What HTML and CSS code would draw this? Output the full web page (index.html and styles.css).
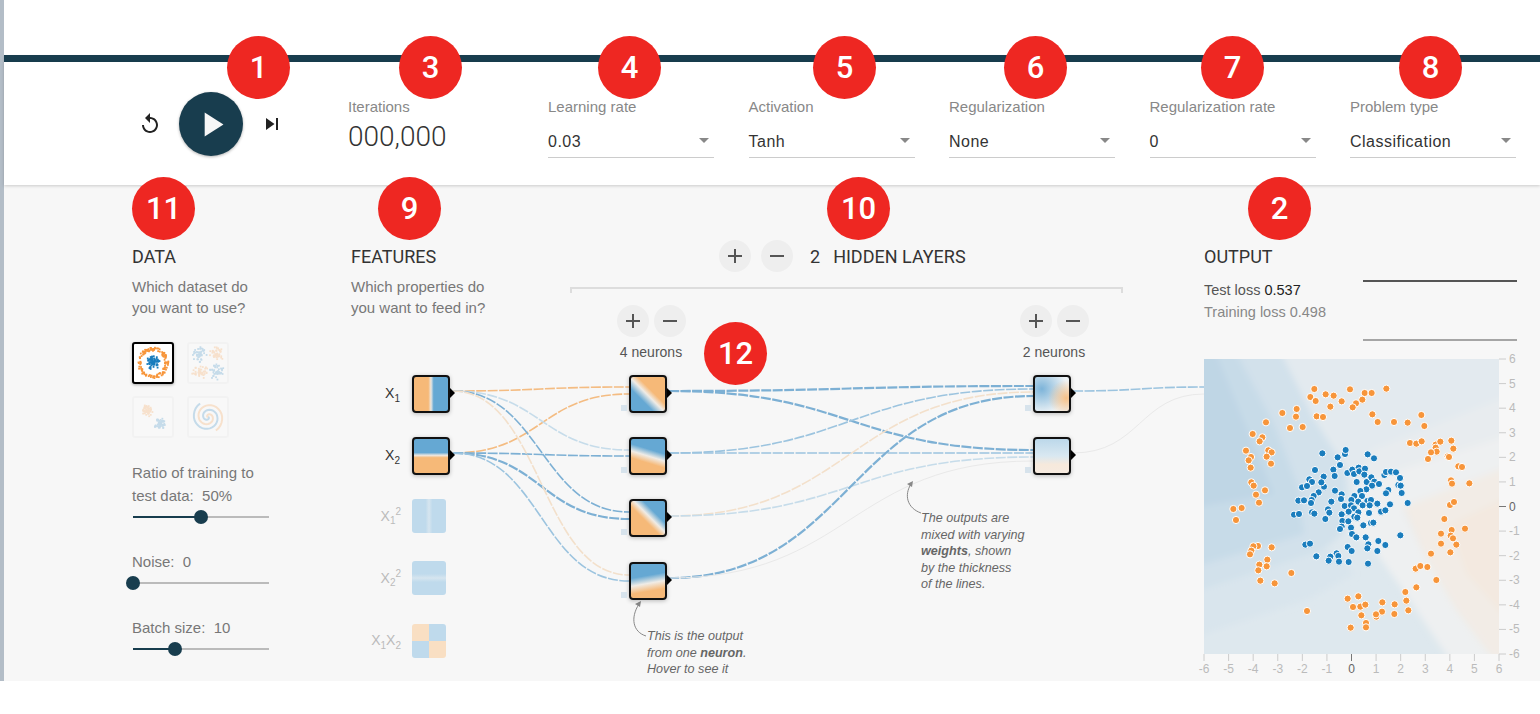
FILE: index.html
```html
<!DOCTYPE html>
<html>

<head>
	<meta charset="UTF-8">
	<title>Tensorflow Playground</title>
	<link rel="stylesheet" href="styles.css">
</head>

<body>
	<svg class="defs" width="0" height="0">
		<symbol id="icon-add" viewBox="0 0 24 24"><path d="M19 13h-6v6h-2v-6H5v-2h6V5h2v6h6v2z" /></symbol>
		<symbol id="icon-remove" viewBox="0 0 24 24"><path d="M19 13H5v-2h14v2z" /></symbol>
	</svg>

	<div class="page">
		<div class="topbar"></div>

		<header class="header">
			<div class="player">
				<svg class="icon-small" viewBox="0 0 24 24"><path d="M12 5V1L7 6l5 5V7c3.31 0 6 2.69 6 6s-2.69 6-6 6-6-2.69-6-6H4c0 4.42 3.58 8 8 8s8-3.58 8-8-3.58-8-8-8z" /></svg>
				<div class="play-btn">
					<svg class="icon-play" viewBox="0 0 24 24"><path d="M8 5v14l11-7z" /></svg>
				</div>
				<svg class="icon-small" viewBox="0 0 24 24"><path d="M6 18l8.5-6L6 6v12zM16 6v12h2V6h-2z" /></svg>
			</div>
			<div class="control">
				<div class="control-label">Iterations</div>
				<div class="iterations">000,000</div>
			</div>
			<div class="control">
				<div class="control-label">Learning rate</div>
				<div class="select">0.03</div>
			</div>
			<div class="control">
				<div class="control-label">Activation</div>
				<div class="select">Tanh</div>
			</div>
			<div class="control">
				<div class="control-label">Regularization</div>
				<div class="select">None</div>
			</div>
			<div class="control">
				<div class="control-label">Regularization rate</div>
				<div class="select">0</div>
			</div>
			<div class="control">
				<div class="control-label">Problem type</div>
				<div class="select">Classification</div>
			</div>
		</header>

		<main class="main">
			<section class="data-col">
				<h4 class="heading">DATA</h4>
				<p class="hint">Which dataset do<br>you want to use?</p>
				<div class="datasets">
					<svg class="dataset selected" id="dsCircle" viewBox="0 0 38 38"></svg>
					<svg class="dataset" id="dsXor" viewBox="0 0 38 38"></svg>
					<svg class="dataset" id="dsGauss" viewBox="0 0 38 38"></svg>
					<svg class="dataset" id="dsSpiral" viewBox="0 0 38 38"></svg>
				</div>
				<div class="slider-label slider-ratio">Ratio of training to<br>test data:&nbsp; 50%</div>
				<div class="slider"><div class="slider-fill" style="width: 50%"></div><div class="slider-thumb" style="left: 50%"></div></div>
				<div class="slider-label">Noise:&nbsp; 0</div>
				<div class="slider"><div class="slider-fill" style="width: 0%"></div><div class="slider-thumb" style="left: 0%"></div></div>
				<div class="slider-label">Batch size:&nbsp; 10</div>
				<div class="slider"><div class="slider-fill" style="width: 31%"></div><div class="slider-thumb" style="left: 31%"></div></div>
			</section>

			<section class="network">
				<div class="features-head">
					<h4 class="heading">FEATURES</h4>
					<p class="hint">Which properties do<br>you want to feed in?</p>
				</div>
				<div class="layers-head">
					<div class="layers-title">
						<div class="round-btn"><svg><use href="#icon-add" /></svg></div>
						<div class="round-btn"><svg><use href="#icon-remove" /></svg></div>
						<span class="layers-count">2</span>
						<span class="layers-text">HIDDEN LAYERS</span>
					</div>
					<div class="bracket"></div>
					<div class="layer-controls">
						<div class="layer-control">
							<div class="round-pair">
								<div class="round-btn"><svg><use href="#icon-add" /></svg></div>
								<div class="round-btn"><svg><use href="#icon-remove" /></svg></div>
							</div>
							<div class="neuron-count">4 neurons</div>
						</div>
						<div class="layer-control">
							<div class="round-pair">
								<div class="round-btn"><svg><use href="#icon-add" /></svg></div>
								<div class="round-btn"><svg><use href="#icon-remove" /></svg></div>
							</div>
							<div class="neuron-count">2 neurons</div>
						</div>
					</div>
				</div>

				<div class="diagram">
					<svg class="links" viewBox="351 185 853 496">
						<path class="link orange" d="M453 391C541 391 541 387 629 387" />
						<path class="link orange" d="M453 453C541 453 541 394 629 394" />
						<path class="link blue pale" d="M453 391C541 391 541 450 629 450" />
						<path class="link blue" d="M453 453C541 453 541 456 629 456" />
						<path class="link blue" d="M453 391C541 391 541 512 629 512" />
						<path class="link blue thick" d="M453 453C541 453 541 519 629 519" />
						<path class="link orange faint" d="M453 391C541 391 541 575 629 575" />
						<path class="link blue mid" d="M453 453C541 453 541 581 629 581" />

						<path class="link blue thick" d="M669 391C850 391 850 386 1033 386" />
						<path class="link blue thick" d="M669 391C850 391 850 450 1033 450" />
						<path class="link blue mid" d="M669 453C850 453 850 389 1033 389" />
						<path class="link blue mid" d="M669 453C850 453 850 453 1033 453" />
						<path class="link orange faint" d="M669 516C850 516 850 392 1033 392" />
						<path class="link blue pale" d="M669 516C850 516 850 457 1033 457" />
						<path class="link blue thick" d="M669 578C850 578 850 396 1033 396" />
						<path class="link grey" d="M669 578C850 578 850 461 1033 461" />

						<path class="link blue mid" d="M1073 391C1140 391 1140 387 1204 387" />
						<path class="link grey" d="M1073 453C1140 453 1140 394 1204 394" />

						<path class="note-arrow" d="M646 636C633 632 630 618 639 604" />
						<path class="note-head" d="M641 601l-6 3 5 3z" />
						<path class="note-arrow" d="M921 513C907 508 904 495 911 484" />
						<path class="note-head" d="M913 481l-6 3 5 3z" />
					</svg>

					<div class="feature feature-1"><span class="feature-label">X<sub>1</sub></span><div class="node heat-x1"></div></div>
					<div class="feature feature-2"><span class="feature-label">X<sub>2</sub></span><div class="node heat-x2"></div></div>
					<div class="feature feature-3 off"><span class="feature-label">X<sub>1</sub><sup>2</sup></span><div class="node-off heat-x1x1"></div></div>
					<div class="feature feature-4 off"><span class="feature-label">X<sub>2</sub><sup>2</sup></span><div class="node-off heat-x2x2"></div></div>
					<div class="feature feature-5 off"><span class="feature-label">X<sub>1</sub>X<sub>2</sub></span><div class="node-off heat-x1x2"></div></div>

					<div class="node hidden-node h1 heat-h1"></div>
					<div class="node hidden-node h2 heat-h2"></div>
					<div class="node hidden-node h3 heat-h3"></div>
					<div class="node hidden-node h4 heat-h4"></div>
					<div class="node hidden-node n1 heat-n1"></div>
					<div class="node hidden-node n2 heat-n2"></div>

					<div class="note note-neuron">This is the output<br>from one <b>neuron</b>.<br>Hover to see it</div>
					<div class="note note-weights">The outputs are<br>mixed with varying<br><b>weights</b>, shown<br>by the thickness<br>of the lines.</div>
				</div>
			</section>

			<section class="output-col">
				<div class="output-top">
					<div class="output-stats">
						<h4 class="heading">OUTPUT</h4>
						<div class="loss loss-test">Test loss <span>0.537</span></div>
						<div class="loss">Training loss 0.498</div>
					</div>
					<div class="loss-chart"></div>
				</div>
				<svg class="plot" id="plot" width="336" height="322" viewBox="0 0 336 322">
					<defs>
						<filter id="soft" x="-10%" y="-10%" width="120%" height="120%"><feGaussianBlur stdDeviation="3" /></filter>
						<clipPath id="plotClip"><rect width="295" height="295" /></clipPath>
					</defs>
					<rect width="295" height="295" fill="#dee8ee" />
					<g clip-path="url(#plotClip)">
						<g filter="url(#soft)">
							<polygon fill="#e3eaef" points="70,-20 315,-20 315,60 190,100 150,130 110,60" />
							<polygon fill="#e8ecef" points="315,33 169,91 150,130 150,160 199,150 315,103" />
							<polygon fill="#d2e1eb" points="-20,-20 70,-20 110,60 142,110 142,171 119,191 -20,237" />
							<polygon fill="#c7dbe8" points="-20,-20 25,-20 70,65 95,130 100,175 -20,211" />
							<polygon fill="#bfd6e5" points="-20,-20 6,-20 45,75 70,135 -20,150" />
							<polygon fill="#d9e5ed" points="-20,237 119,191 135,195 150,215 105,240 -20,282" />
							<polygon fill="#eef0f1" points="150,130 199,110 315,73 315,111 199,151 219,194 252,251 300,315 255,315 205,240 170,190 142,171" />
							<polygon fill="#f2ece6" points="315,103 199,148 219,194 252,251 300,315 315,315" />
							<polygon fill="#f3e9e0" points="315,132 245,165 262,215 315,275" />
						</g>
					</g>
				</svg>
			</section>
		</main>

		<div class="badge b1">1</div>
		<div class="badge b3">3</div>
		<div class="badge b4">4</div>
		<div class="badge b5">5</div>
		<div class="badge b6">6</div>
		<div class="badge b7">7</div>
		<div class="badge b8">8</div>
		<div class="badge b11">11</div>
		<div class="badge b9">9</div>
		<div class="badge b10">10</div>
		<div class="badge b2">2</div>
		<div class="badge b12">12</div>
	</div>

	<script src="script.js"></script>
</body>

</html>
```

FILE: styles.css
```css
* {
	padding: 0;
	margin: 0;
	box-sizing: border-box;
}

body {
	position: relative;
	background: #fff;
	font-family: "Liberation Sans", Arial, sans-serif;
	color: #777;
	overflow: hidden;
}

.defs {
	position: absolute;
}

.page {
	height: 681px;
	padding-top: 55px;
	border-left: 4px solid #b3bdc7;
	display: flex;
	flex-direction: column;
}

.topbar {
	height: 7px;
	background: #183d4e;
	box-shadow: 0 1px 2px rgba(0, 0, 0, .15);
}

/* header */
.header {
	height: 123px;
	padding: 30px 0 0 134px;
	display: grid;
	grid-template-columns: 210px 200px repeat(5, 200.5px);
	background: #fff;
	box-shadow: 0 1px 3px rgba(0, 0, 0, .18);
	position: relative;
}

.player {
	height: 64px;
	display: flex;
	align-items: center;
	gap: 17px;
}

.icon-small {
	width: 24px;
	height: 24px;
	fill: #222;
}

.play-btn {
	width: 64px;
	height: 64px;
	border-radius: 50%;
	background: #183d4e;
	box-shadow: 0 1px 3px rgba(0, 0, 0, .3);
	display: flex;
	align-items: center;
	justify-content: center;
}

.icon-play {
	width: 41px;
	height: 41px;
	fill: #f7f7f7;
}

.control-label {
	margin-top: 6px;
	font-size: 15px;
	line-height: 18px;
	color: #888;
}

.iterations {
	margin-top: 4px;
	font-family: Roboto, sans-serif;
	font-weight: 300;
	font-size: 28px;
	line-height: 34px;
	color: #333;
}

.select {
	position: relative;
	width: 166px;
	height: 36px;
	padding-top: 10px;
	margin-top: 6px;
	font-size: 16px;
	line-height: 20px;
	letter-spacing: .5px;
	color: #333;
	border-bottom: 1px solid #ccc;
}

.select::after {
	content: "";
	position: absolute;
	right: 5px;
	top: 16px;
	border-left: 5px solid transparent;
	border-right: 5px solid transparent;
	border-top: 5px solid #888;
}

/* main area */
.main {
	flex: 1;
	padding-left: 128px;
	display: grid;
	grid-template-columns: 219px 853px 1fr;
	background: #f7f7f7;
	overflow: hidden;
}

.heading {
	font-family: Roboto, sans-serif;
	font-weight: 400;
	font-size: 18px;
	line-height: 20px;
	color: #333;
}

.hint {
	margin-top: 10px;
	font-size: 15px;
	line-height: 20.5px;
	color: #777;
}

.data-col {
	padding-top: 62px;
}

.datasets {
	width: 110px;
	margin-top: 24px;
	display: grid;
	grid-template-columns: 42px 42px;
	gap: 12px 13px;
}

.dataset {
	display: block;
	width: 42px;
	height: 42px;
	border: 2px solid #e4e4e4;
	border-radius: 3px;
	background: #fff;
	opacity: .22;
}

.dataset.selected {
	border-color: #000;
	opacity: 1;
	box-shadow: 0 1px 3px rgba(0, 0, 0, .3);
}

.spiral {
	fill: none;
	stroke-width: 2;
}

.slider-label {
	margin-top: 32px;
	font-size: 15px;
	line-height: 23px;
	color: #777;
	width: 138px;
}

.slider-ratio {
	margin-top: 23px;
}

.slider {
	position: relative;
	width: 136px;
	height: 2px;
	margin: 9px 0 10px 1px;
	background: #bbb;
}

.slider-fill {
	height: 2px;
	background: #183d4e;
}

.slider-thumb {
	position: absolute;
	top: -6px;
	width: 14px;
	height: 14px;
	margin-left: -7px;
	border-radius: 50%;
	background: #183d4e;
}

/* network */
.network {
	position: relative;
	display: grid;
	grid-template-columns: 219px 553px;
	align-content: start;
}

.features-head {
	padding-top: 62px;
}

.layers-head {
	padding-top: 55px;
	position: relative;
	z-index: 1;
}

.layers-title {
	display: flex;
	align-items: center;
	padding-left: 149px;
	height: 32px;
	color: #333;
	font-family: Roboto, sans-serif;
	font-size: 18px;
}

.round-btn {
	flex: none;
	width: 32px;
	height: 32px;
	border-radius: 50%;
	background: #eee;
	display: flex;
	align-items: center;
	justify-content: center;
}

.round-btn svg {
	width: 24px;
	height: 24px;
	fill: #555;
}

.layers-title .round-btn + .round-btn {
	margin-left: 10px;
}

.layers-count {
	margin-left: 17px;
}

.layers-text {
	margin-left: 13px;
}

.bracket {
	height: 6px;
	margin-top: 15px;
	border: 2px solid #ddd;
	border-bottom: 0;
}

.layer-controls {
	display: flex;
	gap: 313px;
	padding-left: 36px;
	margin-top: 12px;
}

.layer-control {
	width: 90px;
	text-align: center;
}

.round-pair {
	display: flex;
	justify-content: center;
	gap: 5px;
}

.neuron-count {
	margin-top: 6px;
	font-size: 14px;
	line-height: 18px;
	color: #555;
}

.diagram {
	position: absolute;
	left: 0;
	top: 0;
	width: 853px;
	height: 496px;
}

.links {
	position: absolute;
	left: 0;
	top: 0;
	width: 853px;
	height: 496px;
}

.link {
	fill: none;
	stroke-width: 1.6;
	stroke-dasharray: 10 1.5;
}

.link.blue {
	stroke: #7db0d4;
}

.link.orange {
	stroke: #f4bc82;
}

.link.thick {
	stroke-width: 2.2;
}

.link.mid {
	stroke: #9cc4df;
}

.link.pale {
	stroke: #c6dcea;
}

.link.faint {
	stroke: #f3e0cb;
}

.link.grey {
	stroke: #e9e9e9;
	stroke-width: 1;
	stroke-dasharray: none;
}

.note-arrow {
	fill: none;
	stroke: #888;
	stroke-width: 1;
}

.note-head {
	fill: #888;
}

.node {
	width: 38px;
	height: 38px;
	border: 2px solid #111;
	border-radius: 4px;
	box-shadow: 0 1px 4px rgba(0, 0, 0, .25);
	position: relative;
}

.node::after {
	content: "";
	position: absolute;
	right: -7px;
	top: 11px;
	border-top: 5px solid transparent;
	border-bottom: 5px solid transparent;
	border-left: 5px solid #000;
}

.node-off {
	width: 34px;
	height: 34px;
	border-radius: 3px;
}

.hidden-node {
	position: absolute;
}

.hidden-node::before {
	content: "";
	position: absolute;
	left: -10px;
	bottom: 0;
	width: 6px;
	height: 6px;
	background: #d7e3ec;
}

.feature {
	position: absolute;
	left: 0;
	width: 99px;
	display: flex;
	justify-content: flex-end;
	align-items: center;
	gap: 12px;
}

.feature.off {
	gap: 11px;
	width: 95px;
}

.feature-1 { top: 190px; }
.feature-2 { top: 252px; }
.feature-3 { top: 314px; }
.feature-4 { top: 376px; }
.feature-5 { top: 439px; }

.feature-label {
	font-size: 14px;
	color: #333;
}

.off .feature-label {
	color: #bbb;
}

.feature-label sub,
.feature-label sup {
	font-size: 10px;
}

.h1 { left: 278px; top: 190px; }
.h2 { left: 278px; top: 252px; }
.h3 { left: 278px; top: 314px; }
.h4 { left: 278px; top: 377px; }
.n1 { left: 682px; top: 190px; }
.n2 { left: 682px; top: 252px; }

.heat-x1 { background: linear-gradient(90deg, #f6b978 42%, #ece8e2 50%, #65a8d3 58%); }
.heat-x2 { background: linear-gradient(180deg, #65a8d3 40%, #ece8e2 48%, #f6b978 55%); }
.heat-x1x1 { background: linear-gradient(90deg, #bfdaec 40%, #d6e5ef 50%, #bfdaec 60%); }
.heat-x2x2 { background: linear-gradient(180deg, #bfdaec 38%, #d6e5ef 50%, #bfdaec 62%); }
.heat-x1x2 { background: conic-gradient(#bfdaec 25%, #f9dfc3 25% 50%, #bfdaec 50% 75%, #f9dfc3 75%); }
.heat-h1 { background: linear-gradient(45deg, #65a8d3 32%, #f0ece6 48%, #f6b978 60%); }
.heat-h2 { background: linear-gradient(197deg, #65a8d3 34%, #f0ece6 50%, #f6b978 66%); }
.heat-h3 { background: linear-gradient(225deg, #65a8d3 32%, #f0ece6 46%, #f6b978 58%); }
.heat-h4 { background: linear-gradient(170deg, #65a8d3 36%, #f0ece6 56%, #f6b978 76%); }
.heat-n1 { background: radial-gradient(circle at 92% 62%, rgba(246, 190, 130, .95), rgba(246, 232, 215, 0) 48%), radial-gradient(circle at 20% 35%, #7db4d9, #eef3f6 72%); }
.heat-n2 { background: linear-gradient(180deg, #bcd8ea, #d9e8f1 50%, #f6e9dc 75%, #f6eadf); }

.note {
	position: absolute;
	font-style: italic;
	font-size: 12.6px;
	line-height: 16.5px;
	color: #666;
	white-space: nowrap;
}

.note-neuron {
	left: 296px;
	top: 443px;
}

.note-weights {
	left: 570px;
	top: 325px;
}

/* output */
.output-col {
	padding-top: 62px;
}

.output-top {
	display: flex;
	height: 112px;
}

.output-stats {
	width: 158.5px;
}

.loss {
	margin-top: 5px;
	font-size: 14.5px;
	line-height: 17px;
	color: #888;
	white-space: nowrap;
}

.loss-test {
	margin-top: 15px;
	color: #555;
}

.loss-test span {
	color: #222;
}

.loss-chart {
	width: 154px;
	height: 61px;
	margin-top: 33px;
	border-top: 2px solid #555;
	border-bottom: 2px solid #a5a5a5;
}

.plot {
	display: block;
	overflow: visible;
}

.plot circle {
	stroke: #fff;
	stroke-width: 1;
}

.tick {
	stroke: #ccc;
	stroke-width: 1;
}

.tick.zero {
	stroke: #777;
}

.tick-text {
	font-size: 12px;
	fill: #bbb;
}

.tick-text.zero {
	fill: #666;
}

/* number markers */
.badge {
	position: absolute;
	width: 63px;
	height: 63px;
	border-radius: 50%;
	background: #ee2722;
	color: #fff;
	font-family: Roboto, sans-serif;
	font-weight: 500;
	font-size: 31px;
	line-height: 63px;
	text-align: center;
	top: 36px;
}

.b1 { left: 227px; }
.b3 { left: 399px; }
.b4 { left: 598px; }
.b5 { left: 813px; }
.b6 { left: 1004px; }
.b7 { left: 1201px; }
.b8 { left: 1399px; }
.b11 { left: 132px; top: 177px; }
.b9 { left: 378px; top: 177px; }
.b10 { left: 827px; top: 177px; }
.b2 { left: 1248px; top: 177px; }
.b12 { left: 704px; top: 322px; }
```

FILE: script.js
```js
var NS = 'http://www.w3.org/2000/svg';

function make(parent, tag, attrs, text) {
	var el = document.createElementNS(NS, tag);
	for (var key in attrs) {
		el.setAttribute(key, attrs[key]);
	}
	if (text !== undefined) {
		el.textContent = text;
	}
	parent.appendChild(el);
	return el;
}

// simple repeatable random, so the picture is the same each time
var seed = 7;

function rnd() {
	seed = (seed * 16807) % 2147483647;
	return seed / 2147483647;
}

function gauss(cx, cy, spread) {
	var a = rnd() * Math.PI * 2;
	var r = rnd() * spread;
	return [cx + Math.cos(a) * r, cy + Math.sin(a) * r];
}

var BLUE = '#1a7dbd';
var ORANGE = '#f7953a';

// scatter, numbers are 3x pixels, the plot starts at 44,27
var orangeTop = [[375,117],[363,141],[379,153],[409,133],[433,137],[457,154],[482,118],[526,129],[547,129],[591,116],[519,149],[500,160],[490,172],[423,170],[382,199],[401,201],[322,177],[320,200],[279,189],[230,217],[302,234],[340,231],[190,252],[219,262],[211,274],[170,302],[237,301],[247,307],[232,320],[185,321],[178,331],[245,341],[184,353],[186,397],[193,407],[227,421],[200,434],[209,458],[132,477],[157,474],[140,510],[549,193],[565,216],[614,216],[655,218],[696,195],[705,228],[662,279],[681,281],[697,274],[739,284],[753,275],[786,272],[792,296],[739,293],[742,305],[725,307],[716,327],[775,319],[779,321],[807,349],[818,351],[785,391],[788,401],[840,400],[782,465],[794,456],[765,507]];
var blueTop = [[399,310],[445,322],[467,312],[469,300],[535,313],[554,325],[452,345],[432,359],[377,360],[403,380],[436,378],[360,388],[368,396],[338,412],[353,408],[404,410],[396,397],[388,427],[474,369],[489,359],[494,372],[508,353],[510,364],[527,356],[525,374],[502,396],[532,396],[546,382],[555,395],[548,407],[569,402],[531,418],[513,423],[585,375],[590,366],[605,365],[620,367],[632,384],[627,405],[634,407],[597,420],[590,430],[637,429],[437,422],[457,433],[495,438],[518,438],[373,438],[367,450],[327,452],[344,451],[426,455],[455,447],[486,450],[507,455],[534,453],[545,450],[564,461],[602,463],[655,459],[466,468],[485,466],[494,475],[520,466],[541,466],[365,459],[416,478],[420,488],[575,485],[588,481],[314,494],[329,492],[368,487],[375,491],[457,493],[478,485],[507,487],[539,489],[495,500],[408,507],[504,503]];
// same, measured from the lower half: add 480 to y
var orangeLow = [[787,60],[827,56],[755,71],[784,77],[791,85],[755,101],[801,104],[783,127],[725,131],[206,108],[192,109],[186,122],[182,133],[247,112],[234,149],[210,164],[232,169],[207,181],[213,212],[256,220],[306,189],[679,176],[693,168],[714,171],[741,210],[681,232],[648,246],[651,272],[657,301],[475,266],[507,259],[491,291],[513,290],[528,284],[579,277],[616,283],[578,305],[615,312],[516,316],[561,320],[560,313],[353,303],[530,339],[484,353],[530,352]];
var blueLow = [[459,33],[477,34],[522,46],[545,39],[552,38],[457,50],[452,57],[485,53],[488,72],[501,82],[529,82],[633,76],[348,104],[362,101],[475,111],[487,123],[537,103],[534,115],[567,93],[588,105],[564,123],[381,139],[423,140],[442,130],[447,138],[418,152],[449,155],[478,156],[536,161]];

var plot = document.getElementById('plot');

function drawPoints(points, color, dy) {
	points.forEach(function(p) {
		make(plot, 'circle', {
			cx: (p[0] - 44) / 3,
			cy: (p[1] + dy - 27) / 3,
			r: 3.6,
			fill: color
		});
	});
}

drawPoints(orangeTop, ORANGE, 0);
drawPoints(blueTop, BLUE, 0);
drawPoints(orangeLow, ORANGE, 480);
drawPoints(blueLow, BLUE, 480);

// axes
for (var i = -6; i <= 6; i++) {
	var pos = (i + 6) * 295 / 12;
	var cls = i === 0 ? ' zero' : '';
	make(plot, 'line', {x1: pos, x2: pos, y1: 295, y2: 302, 'class': 'tick' + cls});
	make(plot, 'text', {x: pos, y: 314, 'text-anchor': 'middle', 'class': 'tick-text' + cls}, i);
	make(plot, 'line', {x1: 295, x2: 302, y1: 295 - pos, y2: 295 - pos, 'class': 'tick' + cls});
	make(plot, 'text', {x: 305, y: 299 - pos, 'class': 'tick-text' + cls}, i);
}

// dataset thumbnails
function dots(id, count, color, pick) {
	var svg = document.getElementById(id);
	for (var n = 0; n < count; n++) {
		var p = pick();
		make(svg, 'rect', {x: p[0], y: p[1], width: 1.8, height: 1.8, fill: color});
	}
}

function ring() {
	var a = rnd() * Math.PI * 2;
	var r = 12 + rnd() * 3.5;
	return [18 + Math.cos(a) * r, 18 + Math.sin(a) * r];
}

function spiral(color, turn) {
	var svg = document.getElementById('dsSpiral');
	var pts = [];
	for (var t = 0; t <= 1; t += 0.02) {
		var a = turn + t * Math.PI * 3.4;
		var r = t * 16;
		pts.push((19 + Math.cos(a) * r).toFixed(1) + ',' + (19 + Math.sin(a) * r).toFixed(1));
	}
	make(svg, 'polyline', {points: pts.join(' '), stroke: color, 'class': 'spiral'});
}

dots('dsCircle', 130, ORANGE, ring);
dots('dsCircle', 80, BLUE, function() { return gauss(18, 18, 7); });
dots('dsXor', 45, BLUE, function() { return gauss(10, 10, 8); });
dots('dsXor', 45, ORANGE, function() { return gauss(27, 10, 8); });
dots('dsXor', 45, ORANGE, function() { return gauss(10, 27, 8); });
dots('dsXor', 45, BLUE, function() { return gauss(27, 27, 8); });
dots('dsGauss', 60, ORANGE, function() { return gauss(12, 12, 6); });
dots('dsGauss', 60, BLUE, function() { return gauss(25, 25, 6); });
spiral(BLUE, 0);
spiral(ORANGE, Math.PI);
```
